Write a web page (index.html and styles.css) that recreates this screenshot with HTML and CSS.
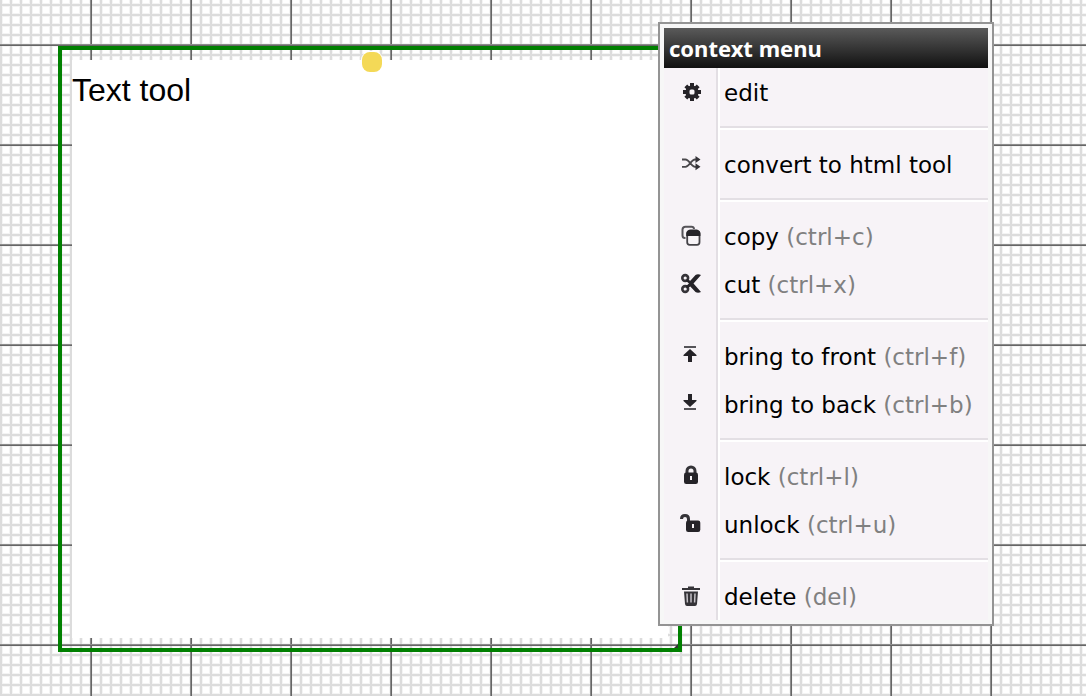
FILE: index.html
```html
<!DOCTYPE html>
<html lang="en">
<head>
<meta charset="utf-8">
<title>Canvas</title>
<link rel="stylesheet" href="styles.css">
</head>
<body>
<main class="canvas">
  <section class="tool">
    <span class="tool-pin"></span>
    <div class="tool-text">Text tool</div>
    <span class="tool-resize"></span>
  </section>

  <nav class="menu" aria-labelledby="menu-title">
    <h1 class="menu-title" id="menu-title">context menu</h1>
    <ul class="menu-list">
      <li class="menu-group">
        <button class="item" type="button">
          <svg class="icon" viewBox="0 0 24 24"><g stroke="#252328" stroke-width="4"><path d="M12 3v18M3 12h18M5.8 5.8l12.4 12.4M18.2 5.8L5.8 18.2"/></g><circle cx="12" cy="12" r="6.6" fill="#252328"/><rect x="9.5" y="9.5" width="5" height="5" rx="1.5" fill="#f7f3f7"/></svg>
          <span class="label">edit</span>
        </button>
      </li>
      <li class="menu-group">
        <button class="item" type="button">
          <svg class="icon" viewBox="0 0 24 24"><g fill="none" stroke="#4a484c" stroke-width="1.8"><path d="M2 7.500h3.500C9 7.500 11.500 14.800 15 14.800h2M2 14.800h3.500C9 14.800 11.500 7.500 15 7.500h2"/></g><path fill="#353338" d="M15.500 4l5 3.500-5 3.500zM15.500 11.300l5 3.500-5 3.500z"/></svg>
          <span class="label">convert to html tool</span>
        </button>
      </li>
      <li class="menu-group">
        <button class="item" type="button">
          <svg class="icon" viewBox="0 0 24 24"><path d="M5.500 14H5a2.500 2.500 0 0 1-2.500-2.500V5.500A3 3 0 0 1 5.500 2.700h6A2.500 2.500 0 0 1 14 5" fill="none" stroke="#555358" stroke-width="2"/><rect x="7.200" y="7.200" width="12.300" height="13.600" rx="2.500" fill="#f7f3f7" stroke="#444247" stroke-width="1.800"/><path fill="#252328" d="M6.300 12V9.500c0-2 2-4 4.500-4h5c2.500 0 4.600 2 4.600 4V12z"/></svg>
          <span class="label">copy <span class="key">(ctrl+c)</span></span>
        </button>
        <button class="item" type="button">
          <svg class="icon" viewBox="0 0 24 24"><g fill="none" stroke="#353338" stroke-width="2.600"><circle cx="5.200" cy="6" r="2.900"/><circle cx="5.200" cy="17" r="2.900"/></g><path fill="#252328" d="M7 7l3.300 1.800L15.500 3c1.500-1 3.500-1 5.500 0L13.500 11.500 21 20c-2 1-4 1-5.500 0l-5.200-5.500L7 16.500l-1-2.500 3-2.500L6 9z"/></svg>
          <span class="label">cut <span class="key">(ctrl+x)</span></span>
        </button>
      </li>
      <li class="menu-group">
        <button class="item" type="button">
          <svg class="icon" viewBox="0 0 24 24"><path fill="#555358" d="M4 2h12v2H4z"/><path fill="#252328" d="M10 5l6.500 6v1H12v6H8v-6H3.500v-1z"/></svg>
          <span class="label">bring to front <span class="key">(ctrl+f)</span></span>
        </button>
        <button class="item" type="button">
          <svg class="icon" viewBox="0 0 24 24"><path fill="#555358" d="M4 16h12v2H4z"/><path fill="#252328" d="M10 15l6.500-6V8H12V2H8v6H3.500v1z"/></svg>
          <span class="label">bring to back <span class="key">(ctrl+b)</span></span>
        </button>
      </li>
      <li class="menu-group">
        <button class="item" type="button">
          <svg class="icon" viewBox="0 0 24 24"><path d="M7 10V7a4 4 0 0 1 8 0v3" fill="none" stroke="#353338" stroke-width="3"/><rect x="4" y="8.500" width="14" height="11.500" rx="2.200" fill="#252328"/><rect x="10" y="12" width="2" height="4" fill="#f7f3f7"/></svg>
          <span class="label">lock <span class="key">(ctrl+l)</span></span>
        </button>
        <button class="item" type="button">
          <svg class="icon" viewBox="0 0 24 24"><path d="M1.500 7C1.500 4.500 3 3.500 5 3.500s3.500 1.300 3.500 3.500v3" fill="none" stroke="#353338" stroke-width="3"/><rect x="6" y="8.500" width="14.300" height="11.500" rx="2.200" fill="#252328"/><rect x="12" y="12" width="2" height="4" fill="#f7f3f7"/></svg>
          <span class="label">unlock <span class="key">(ctrl+u)</span></span>
        </button>
      </li>
      <li class="menu-group">
        <button class="item" type="button">
          <svg class="icon" viewBox="0 0 24 24"><path fill="#353338" d="M8 2.500h6V4h6v2H2V4h6zM4 7.500h14L17 20q-.3 2-2 2H7q-1.700 0-2-2z"/><path d="M7 9.500l.4 9M11 9.500v9M15 9.500l-.4 9" stroke="#c4c0c6" stroke-width="1.500"/></svg>
          <span class="label">delete <span class="key">(del)</span></span>
        </button>
      </li>
    </ul>
  </nav>
</main>
</body>
</html>
```
FILE: styles.css
```css
* {
  box-sizing: border-box;
}

body {
  margin: 0;
}

.canvas {
  position: relative;
  min-height: 100vh;
  overflow: hidden;
  background-color: #fff;
  background-image:
    linear-gradient(#8c8c8c 1px, #666 1px, #666 2px, transparent 2px),
    linear-gradient(90deg, #8c8c8c 1px, #666 1px, #666 2px, transparent 2px),
    linear-gradient(#dcdcdc 2px, transparent 2px),
    linear-gradient(90deg, #dcdcdc 2px, transparent 2px),
    linear-gradient(#f4f4f4 4px, transparent 4px),
    linear-gradient(90deg, #f4f4f4 4px, transparent 4px);
  background-size: 100px 100px, 100px 100px, 10px 10px, 10px 10px, 10px 10px, 10px 10px;
  background-position: 0 44px, 90px 0, 0 4px, 0 0, 0 3px, 9px 0;
}

.tool {
  position: absolute;
  left: 58px;
  top: 46px;
  width: 624px;
  padding: 10px;
  border: 4px solid #008000;
}

.tool-text {
  min-height: 578px;
  padding: 10px 0;
  background: #fff;
  color: #000;
  font: 32px/40px "Liberation Sans", Arial, sans-serif;
}

.tool-pin {
  position: absolute;
  top: 2px;
  left: 300px;
  width: 20px;
  height: 20px;
  border-radius: 8px;
  background: #f4d957;
  box-shadow: 0 0 0 1px #fff;
}

.tool-resize {
  position: absolute;
  right: 0;
  bottom: 0;
  border-bottom: 4px solid #333;
  border-left: 4px solid transparent;
}

.menu {
  position: absolute;
  left: 658px;
  top: 22px;
  min-width: 336px;
  padding: 4px;
  border: 2px solid #949494;
  background: #f7f7f7;
}

.menu-title {
  margin: 0;
  padding: 0 5px;
  background: linear-gradient(#5a5a5a, #111);
  color: #fff;
  font: bold 22px/40px "Noto Sans", sans-serif;
}

.menu-list {
  margin: 0;
  padding: 0;
  list-style: none;
  background: linear-gradient(90deg, #f7f3f7 52px, #e3dfe4 52px, #e3dfe4 54px, #fff 54px, #fff 56px, #f7f3f7 56px);
}

.menu-group + .menu-group {
  padding-top: 10px;
}

.menu-group + .menu-group::before {
  content: "";
  display: block;
  height: 2px;
  margin-left: 56px;
  margin-bottom: 10px;
  border-top: 2px solid #e3dfe4;
  background: #fff;
}

.item {
  display: flex;
  align-items: center;
  gap: 20px;
  width: 100%;
  height: 48px;
  padding: 0 8px 0 16px;
  border: 0;
  background: transparent;
  color: #000;
  font: 23px/28px "DejaVu Sans", Verdana, sans-serif;
  text-align: left;
  white-space: nowrap;
}

.label {
  padding-top: 2px;
}

.icon {
  flex: none;
  width: 24px;
  height: 24px;
}

.key {
  color: #808080;
}
```
